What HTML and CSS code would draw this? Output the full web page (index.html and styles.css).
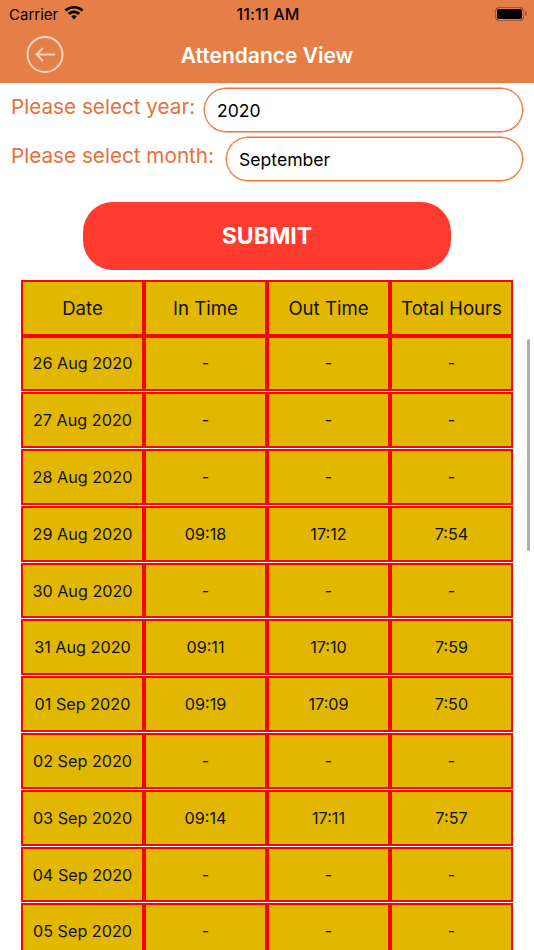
FILE: index.html
```html
<!DOCTYPE html>
<html lang="en">
<head>
<meta charset="utf-8">
<title>Attendance View</title>
<link rel="stylesheet" href="styles.css">
</head>
<body>
<div class="screen">
  <header class="topbar">
    <div class="status">
      <div class="status-left">
        <span>Carrier</span>
        <svg class="wifi" viewBox="0 0 20 14" width="20" height="14"><path fill="#000" d="M10 2.600c2.900 0 5.500 1.100 7.500 3L19.500 3.600C16.900 1.200 13.600 0 10 0S3.100 1.200.5 3.600l2 2c2-1.900 4.600-3 7.500-3z"/><path fill="#000" d="M10 7.300c1.600 0 3 .6 4.100 1.600l2-2.100C14.500 5.300 12.400 4.400 10 4.400s-4.500.9-6.100 2.400l2 2.100C7 7.900 8.400 7.300 10 7.300z"/><path fill="#000" d="M10 9.200c-1.100 0-2 .4-2.700 1.100l2.700 3.300 2.700-3.300c-.7-.7-1.600-1.100-2.700-1.100z"/></svg>
      </div>
      <span class="clock">11:11 AM</span>
      <div class="battery"><span class="battery-fill"></span><span class="battery-cap"></span></div>
    </div>
    <div class="nav">
      <svg class="back" viewBox="0 0 38 38" width="38" height="38"><circle cx="19" cy="18.500" r="17.500" fill="none" stroke="#f6d5c3" stroke-width="2"/><path d="M29 18.500H10.500M17 12l-6.500 6.500L17 25" fill="none" stroke="#f6d5c3" stroke-width="2"/></svg>
      <h1>Attendance View</h1>
    </div>
  </header>

  <section class="filters">
    <div class="field field-year">
      <label>Please select year:</label>
      <div class="input">2020</div>
    </div>
    <div class="field field-month">
      <label>Please select month:</label>
      <div class="input">September</div>
    </div>
  </section>

  <button class="submit">SUBMIT</button>

  <div class="table">
    <div class="row head"><div>Date</div><div>In Time</div><div>Out Time</div><div>Total Hours</div></div>
    <div class="row first"><div>26 Aug 2020</div><div>-</div><div>-</div><div>-</div></div>
    <div class="row"><div>27 Aug 2020</div><div>-</div><div>-</div><div>-</div></div>
    <div class="row"><div>28 Aug 2020</div><div>-</div><div>-</div><div>-</div></div>
    <div class="row"><div>29 Aug 2020</div><div>09:18</div><div>17:12</div><div>7:54</div></div>
    <div class="row"><div>30 Aug 2020</div><div>-</div><div>-</div><div>-</div></div>
    <div class="row"><div>31 Aug 2020</div><div>09:11</div><div>17:10</div><div>7:59</div></div>
    <div class="row"><div>01 Sep 2020</div><div>09:19</div><div>17:09</div><div>7:50</div></div>
    <div class="row"><div>02 Sep 2020</div><div>-</div><div>-</div><div>-</div></div>
    <div class="row"><div>03 Sep 2020</div><div>09:14</div><div>17:11</div><div>7:57</div></div>
    <div class="row"><div>04 Sep 2020</div><div>-</div><div>-</div><div>-</div></div>
    <div class="row"><div>05 Sep 2020</div><div>-</div><div>-</div><div>-</div></div>
  </div>

  <div class="scrollbar"></div>
</div>
</body>
</html>
```

FILE: styles.css
```css
* { box-sizing: border-box; }
html, body { margin: 0; padding: 0; background: #fff; }
body { font-family: Inter, "Liberation Sans", sans-serif; color: #000; }

.screen { position: relative; width: 534px; height: 950px; overflow: hidden; }

.topbar { height: 83px; background: #e67e47; display: flex; flex-direction: column; }
.status { height: 28px; padding: 0 7px 0 9px; display: grid; grid-template-columns: 1fr auto 1fr; align-items: center; font-size: 15px; color: #000; }
.status-left { display: flex; align-items: center; gap: 6px; }
.wifi { margin-top: -3px; }
.clock { font-weight: 500; font-size: 16px; letter-spacing: .2px; }
.battery { justify-self: end; display: flex; align-items: center; margin-top: -1px; }
.battery-fill { display: block; width: 29px; height: 14px; border: 1px solid #a55a34; border-radius: 4px; background: #000; box-shadow: inset 0 0 0 1px #e67e47; }
.battery-cap { display: block; width: 2px; height: 5px; margin-left: 1px; background: #a55a34; border-radius: 0 2px 2px 0; }

.nav { position: relative; flex: 1; display: flex; align-items: center; justify-content: center; }
.nav h1 { margin: 0 0 1px; font-size: 21px; font-weight: 600; color: #fff; }
.back { position: absolute; left: 26px; top: 8px; }

.filters { padding-top: 5px; }
.field { display: flex; }
.field-year { height: 49px; }
.field label { padding: 4px 0 0 11px; font-size: 20.700px; line-height: 30px; color: #e8703a; white-space: nowrap; }
.input { height: 44px; border: 1px solid #f0702e; box-shadow: 0 0 0 .5px #f0702e; border-radius: 22px; font-size: 17.600px; line-height: 43px; padding-left: 12px; }
.field-year .input { width: 319px; margin-left: auto; margin-right: 11px; }
.field-month .input { width: 297px; margin-left: auto; margin-right: 11px; }

.submit { display: block; width: 368px; height: 68px; margin: 21px 0 0 83px; border: 0; border-radius: 30px; background: #ff3b30; color: #fff; font: 700 23px Inter, "Liberation Sans", sans-serif; }

.table { width: 492px; margin: 10px 0 0 21px; }
.row { display: grid; grid-template-columns: repeat(4, 123px); height: 55.800px; margin-top: 1px; }
.row.head { margin-top: 0; height: 55.500px; }
.row.first { margin-top: 0; }
.row div { display: flex; align-items: center; justify-content: center; border: 2px solid #ff0000; background: #e2b700; font-size: 16.200px; color: #111; }
.row.head div { font-size: 18.600px; padding-top: 1px; }

.scrollbar { position: absolute; right: 4px; top: 339px; width: 3.500px; height: 212px; border-radius: 2px; background: #adadad; }
```
